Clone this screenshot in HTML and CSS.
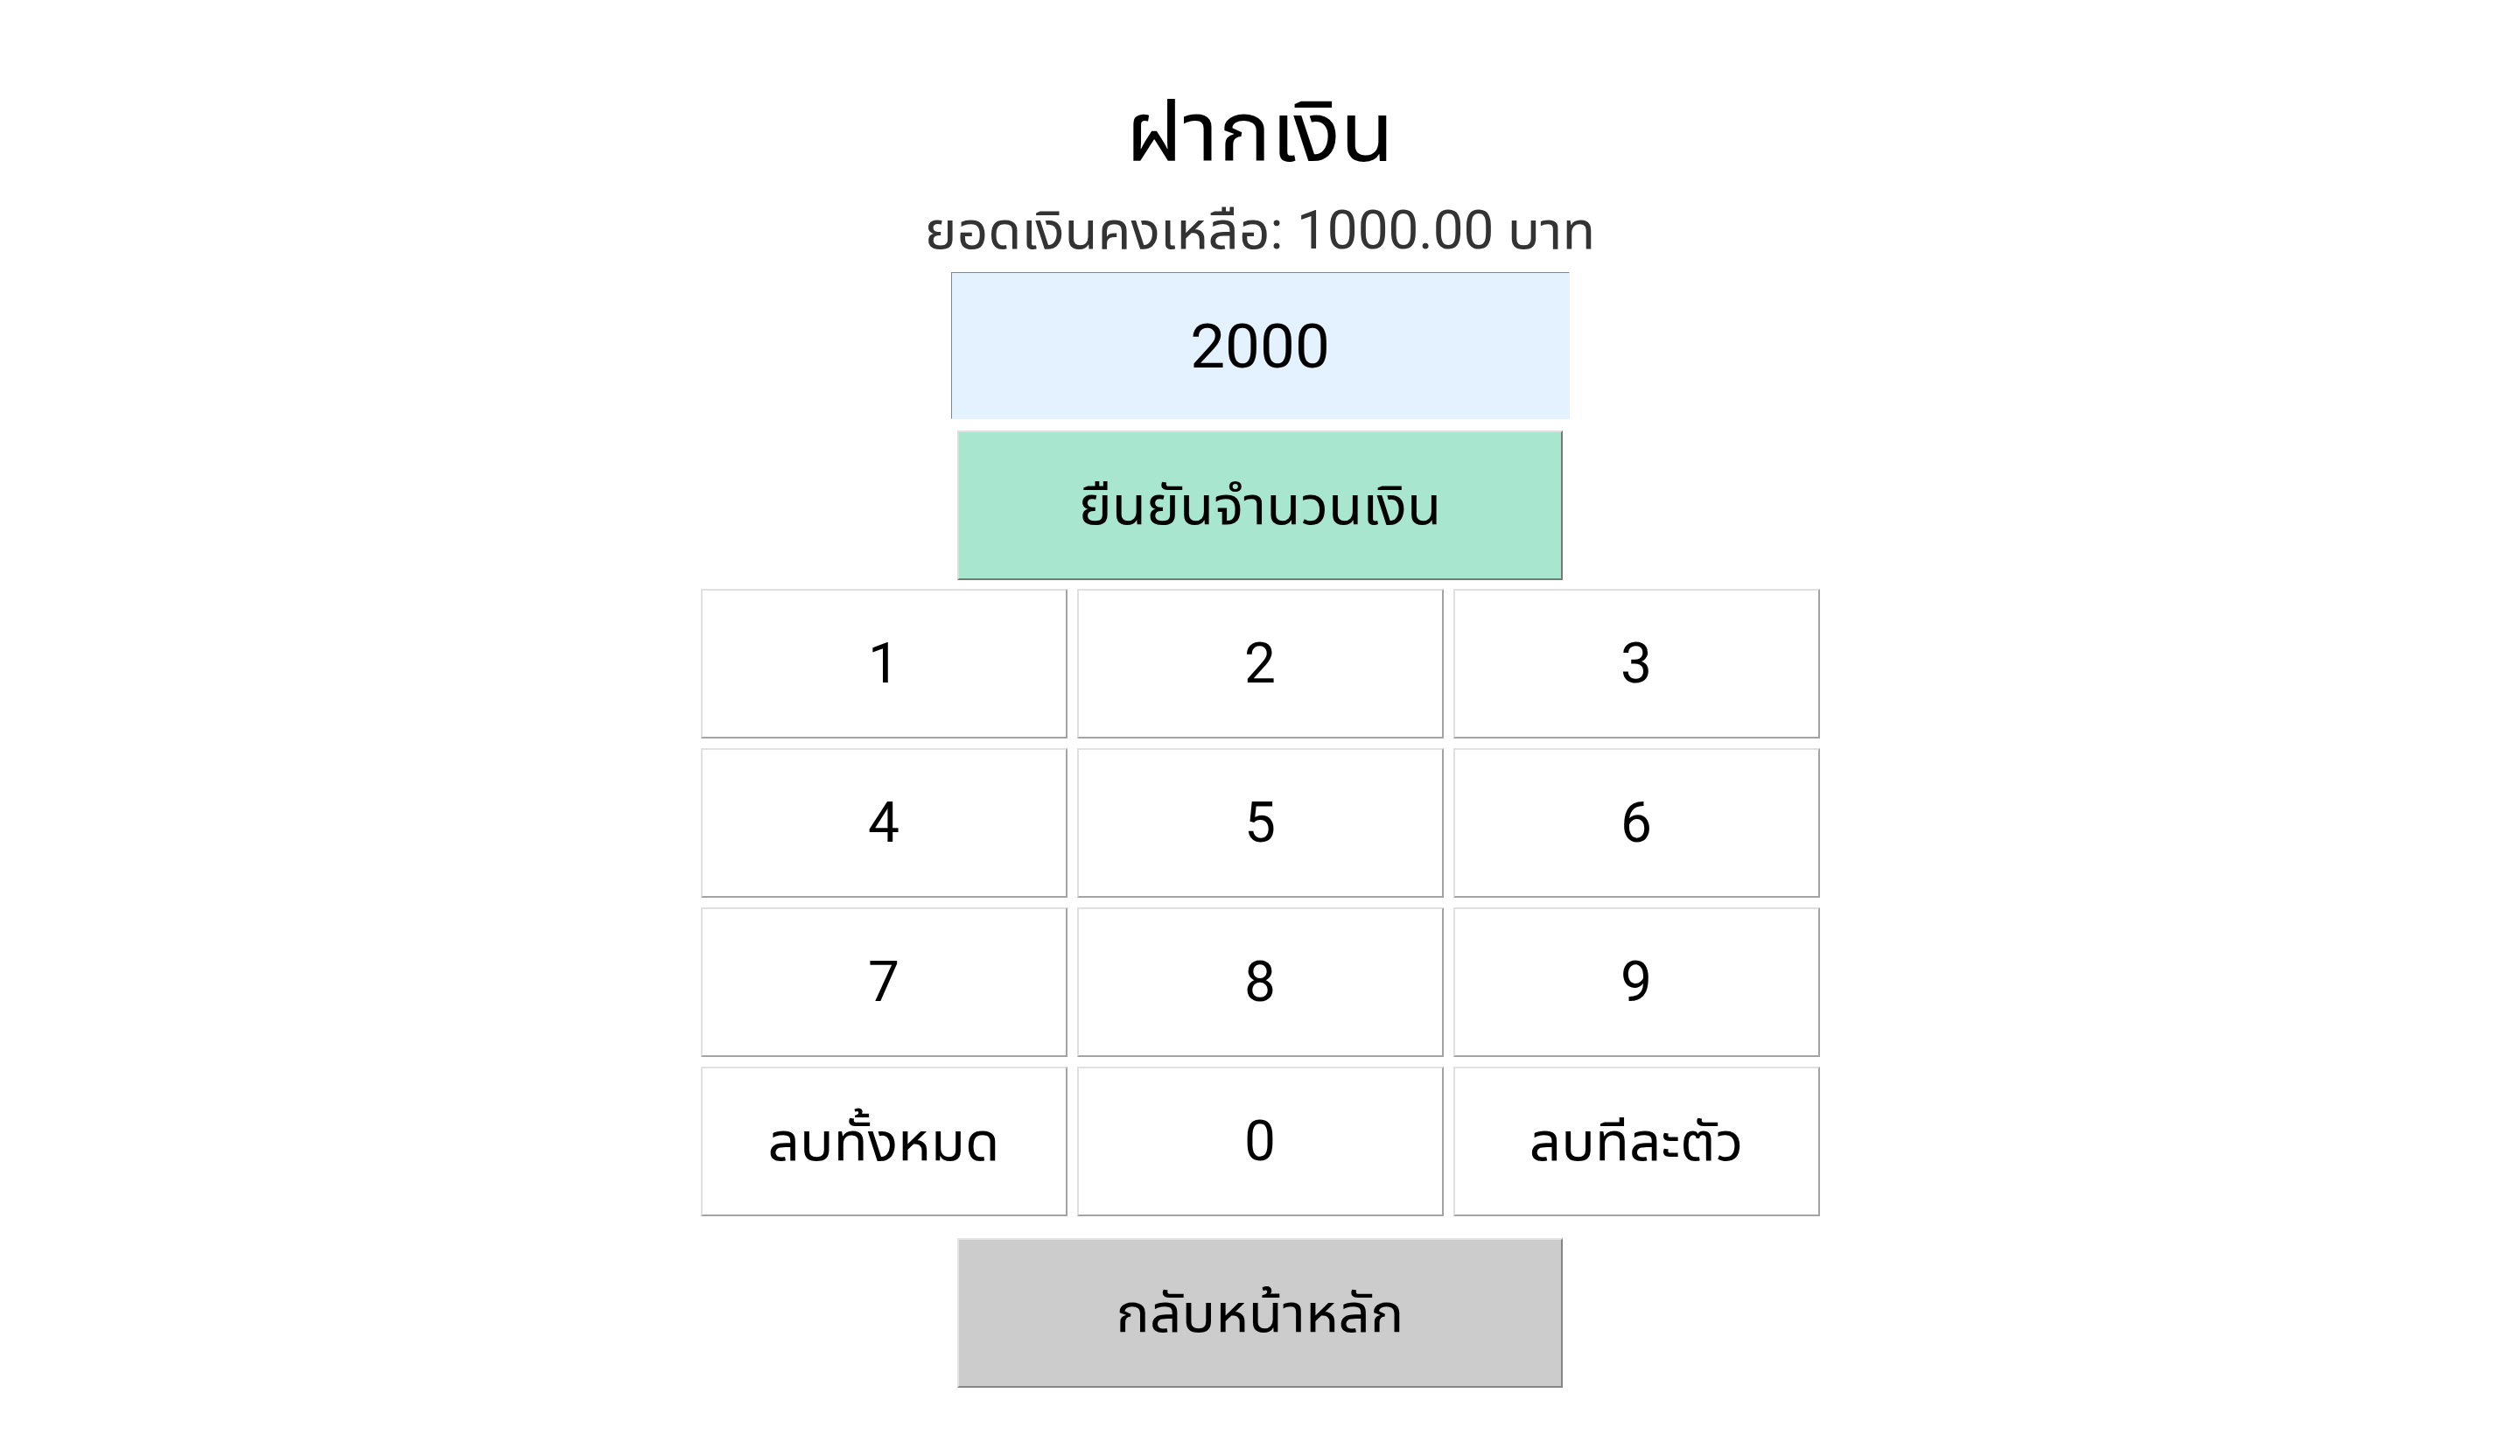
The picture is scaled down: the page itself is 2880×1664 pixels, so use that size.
FILE: index.html
```html
<!DOCTYPE html>
<html>
<head>
<meta charset="utf-8">
<title>ฝากเงิน</title>
<link rel="stylesheet" href="styles.css">
</head>
<body>
<main class="page">
  <h1 class="title">ฝากเงิน</h1>
  <p class="balance">ยอดเงินคงเหลือ: 1000.00 บาท</p>
  <input class="amount" type="text" value="2000" readonly>
  <button class="btn confirm">ยืนยันจำนวนเงิน</button>
  <div class="keypad">
    <button class="btn key">1</button>
    <button class="btn key">2</button>
    <button class="btn key">3</button>
    <button class="btn key">4</button>
    <button class="btn key">5</button>
    <button class="btn key">6</button>
    <button class="btn key">7</button>
    <button class="btn key">8</button>
    <button class="btn key">9</button>
    <button class="btn key">ลบทั้งหมด</button>
    <button class="btn key">0</button>
    <button class="btn key">ลบทีละตัว</button>
  </div>
  <button class="btn back">กลับหน้าหลัก</button>
</main>
</body>
</html>
```
FILE: styles.css
```css
html, body {
  margin: 0;
  padding: 0;
  background: #ffffff;
}
body {
  font-family: Roboto, "Noto Sans Thai UI", Umpush, Loma, sans-serif;
  color: #000;
}
.page {
  display: flex;
  flex-direction: column;
  align-items: center;
  padding-top: 94px;
}
.title {
  margin: 0;
  font-size: 100px;
  font-weight: 400;
  line-height: 112px;
}
.balance {
  margin: 0;
  font-size: 62px;
  line-height: 80px;
  color: #333333;
  margin-top: 17px;
}
.amount {
  box-sizing: border-box;
  margin-top: 8px;
  width: 707px;
  height: 168px;
  font-family: Roboto, "Noto Sans Thai UI", Umpush, Loma, sans-serif;
  font-size: 71px;
  text-align: center;
  background: #e4f1fe;
  border-style: solid;
  border-width: 1px;
  border-color: #80868c #e4f1fe #e4f1fe #80868c;
  color: #000;
  outline: none;
  padding: 0;
}
.btn {
  box-sizing: border-box;
  font-family: Roboto, "Noto Sans Thai UI", Umpush, Loma, sans-serif;
  font-size: 64px;
  line-height: 76px;
  color: #000;
  border-style: solid;
  border-width: 2px;
  border-color: #dedede #8a8a8a #8a8a8a #dedede;
  padding: 0;
  cursor: pointer;
}
.confirm {
  margin-top: 13px;
  width: 692px;
  height: 171px;
  background: #a8e6cf;
  border-color: #dedede #6f7d77 #6f7d77 #dedede;
}
.keypad {
  margin-top: 10px;
  display: grid;
  grid-template-columns: repeat(3, 419px);
  grid-auto-rows: 171px;
  gap: 11px;
}
.key {
  background: #ffffff;
  border-color: #e0e0e0 #a3a3a3 #a3a3a3 #e0e0e0;
}
.back {
  margin-top: 25px;
  width: 692px;
  height: 171px;
  background: #cccccc;
  border-color: #e3e3e3 #858585 #858585 #e3e3e3;
}
```
